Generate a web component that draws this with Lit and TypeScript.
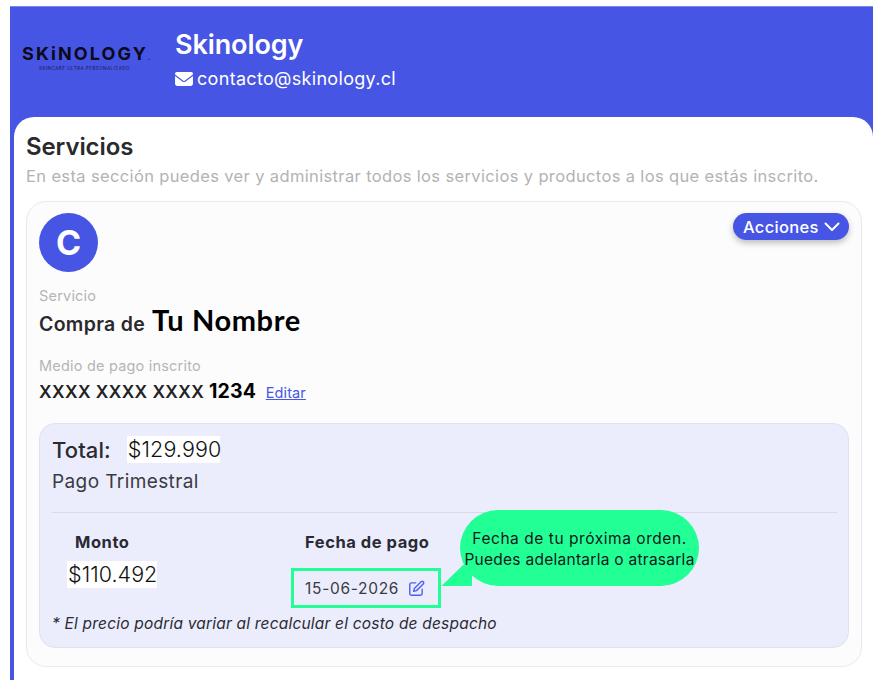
import { LitElement, html, css } from "lit";
import { customElement } from "lit/decorators.js";

@customElement("app-root")
export class AppRoot extends LitElement {
  static styles = css`
    :host { display: block; background: #fff; height: 680px; overflow: hidden; font-family: "Inter", "Liberation Sans", sans-serif; color: #212529; }
    .frame { margin: 6px 9px 0 10px; background: #4755e4; height: 674px; border-top: 1px solid #7b86ec; box-sizing: border-box; }
    .head { height: 110px; display: flex; box-sizing: border-box; padding: 0 0 0 12px; }
    .logo { width: 153px; padding-top: 39px; box-sizing: border-box; color: #0a0a1a; }
    .logo b { display: block; font-size: 18px; line-height: 16px; font-weight: 700; letter-spacing: 2.1px; white-space: nowrap; }
    .logo b i { font-style: normal; font-size: 7px; letter-spacing: 0; color: #1a1a40; }
    .logo span { display: block; font-size: 4.5px; line-height: 6px; letter-spacing: 0.5px; margin-left: 17px; white-space: nowrap; color: #1a1a50; }
    .ident { color: #fff; padding-top: 21px; }
    .ident h1 { margin: 0; font-size: 27px; line-height: 34px; font-weight: 600; letter-spacing: -0.1px; }
    .mail { display: flex; align-items: center; gap: 4px; margin-top: 5px; font-size: 18px; line-height: 24px; letter-spacing: 0.31px; font-weight: 400; }
    .mail svg { width: 18px; height: 14px; }
    .panel { margin-left: 4px; background: #fff; border-radius: 20px 20px 0 0; height: 563px; padding: 13px 11px 0 12px; box-sizing: border-box; }
    h2 { margin: 0; font-size: 24px; line-height: 33px; font-weight: 600; color: #2a2a2c; letter-spacing: -0.1px; }
    .sub { margin: 2px 0 0; font-size: 16.5px; line-height: 22px; color: #b3b3b3; letter-spacing: 0.36px; white-space: nowrap; }
    .card { margin-top: 14px; background: #fcfcfd; border: 1px solid #e8e8f2; border-radius: 20px; height: 466px; box-sizing: border-box; padding: 11px 12px 11px 12px; position: relative; }
    .top { display: flex; justify-content: space-between; align-items: flex-start; }
    .avatar { width: 59px; height: 59px; border-radius: 50%; background: #4755e4; color: #fff; display: flex; align-items: center; justify-content: center; font-size: 34px; font-weight: 700; }
    .btn { display: flex; align-items: center; gap: 5px; height: 27px; padding: 0 0 0 10px; width: 116px; box-sizing: border-box; background: #4755e4; color: #fff; border-radius: 14px; font-size: 16.5px; font-weight: 500; box-shadow: 0 3px 6px rgba(0,0,0,.25); letter-spacing: .3px; }
    .btn svg { width: 16px; height: 10px; }
    .label { font-size: 14.5px; line-height: 18px; color: #b5b5b5; letter-spacing: .2px; }
    .l1 { margin-top: 15px; }
    .val { display: flex; align-items: baseline; white-space: nowrap; }
    .compra { font-size: 19.5px; font-weight: 600; color: #2a2a2c; letter-spacing: .3px; }
    .nombre { font-family: "Lato", sans-serif; font-size: 29px; font-weight: 700; color: #000; margin-left: 7px; line-height: 30px; letter-spacing: .6px; }
    .l2 { margin-top: 21px; }
    .cardno { margin-top: 4px; font-size: 17.5px; line-height: 24px; font-weight: 600; letter-spacing: .38px; color: #222; white-space: nowrap; }
    .cardno b { color: #000; font-weight: 700; font-size: 19.5px; letter-spacing: .1px; }
    .cardno a { font-size: 14.5px; font-weight: 400; color: #4755e4; text-decoration: underline; margin-left: 5px; letter-spacing: .1px; }
    .inner { margin-top: 18px; background: #ebedfd; border: 1px solid #e0e2f2; border-radius: 16px; height: 225px; box-sizing: border-box; padding: 12px 11px 12px 12px; position: relative; }
    .total { display: flex; align-items: center; height: 27px; }
    .total strong { font-size: 22px; font-weight: 500; color: #2a2a33; letter-spacing: .1px; }
    .white { background: #fff; color: #111; font-size: 21.5px; font-weight: 300; line-height: 27px; padding: 0 1px; white-space: nowrap; }
    .total .white { margin-left: 16px; width: 93px; box-sizing: border-box; letter-spacing: .1px; }
    .plan { font-size: 19px; line-height: 26px; margin-top: 6px; color: #3a3a42; letter-spacing: .4px; }
    hr { border: none; border-top: 1px solid #d8dae8; margin: 17px 0 0; }
    .cols { display: grid; grid-template-columns: 239px 1fr; height: 97px; }
    .c1 h4, .c2 h4 { margin: 19px 0 0; font-size: 16.5px; line-height: 21px; font-weight: 700; color: #2a2a33; letter-spacing: .55px; }
    .c1 h4 { padding-left: 23px; }
    .c1 .white { display: inline-block; margin: 8px 0 0 15px; width: 90px; box-sizing: border-box; letter-spacing: .05px; }
    .c2 h4 { padding-left: 14px; white-space: nowrap; }
    .date { display: inline-flex; align-items: center; gap: 9px; margin-top: 15px; width: 150px; height: 40px; box-sizing: border-box; border: 3px solid #22ff95; padding-left: 11px; font-size: 15.5px; color: #3a3a42; letter-spacing: .7px; }
    .date svg { width: 17px; height: 17px; }
    .note { font-size: 15.5px; line-height: 20px; font-style: italic; color: #2a2a33; margin-top: 4px; letter-spacing: .2px; white-space: nowrap; }
    .callout { position: absolute; left: 420px; top: 86px; width: 239px; height: 76px; background: #22ff95; border-radius: 38px; color: #101820; font-size: 15.5px; line-height: 21px; text-align: center; box-sizing: border-box; padding-top: 18px; white-space: nowrap; letter-spacing: .27px; }
    .callout .first { letter-spacing: .55px; }
    .tail { position: absolute; left: 402px; top: 141px; width: 30px; height: 21px; }
  `;
  render() {
    return html`<div class="frame">
      <div class="head">
        <div class="logo"><b>SKiNOLOGY<i>.</i></b><span>SKINCARE ULTRA PERSONALIZADO</span></div>
        <div class="ident">
          <h1>Skinology</h1>
          <div class="mail"><svg viewBox="0 0 512 400"><path fill="#fff" d="M48 0C21.500 0 0 21.500 0 48c0 15.100 7.100 29.300 19.200 38.400l217.600 163.200c11.400 8.500 27 8.500 38.400 0L492.800 86.400C504.900 77.300 512 63.100 512 48c0-26.500-21.500-48-48-48H48zM0 112v224c0 35.300 28.700 64 64 64h384c35.300 0 64-28.700 64-64V112L294.400 275.200c-22.800 17.100-54 17.100-76.800 0L0 112z"/></svg>contacto@skinology.cl</div>
        </div>
      </div>
      <div class="panel">
        <h2>Servicios</h2>
        <p class="sub">En esta sección puedes ver y administrar todos los servicios y productos a los que estás inscrito.</p>
        <div class="card">
          <div class="top">
            <div class="avatar">C</div>
            <div class="btn">Acciones <svg viewBox="0 0 16 10"><path d="M1.500 1.500 8 8l6.500-6.500" fill="none" stroke="#fff" stroke-width="2" stroke-linecap="round" stroke-linejoin="round"/></svg></div>
          </div>
          <div class="label l1">Servicio</div>
          <div class="val"><span class="compra">Compra de</span><span class="nombre">Tu Nombre</span></div>
          <div class="label l2">Medio de pago inscrito</div>
          <div class="cardno">XXXX XXXX XXXX <b>1234</b> <a>Editar</a></div>
          <div class="inner">
            <div class="total"><strong>Total:</strong><span class="white">$129.990</span></div>
            <div class="plan">Pago Trimestral</div>
            <hr />
            <div class="cols">
              <div class="c1"><h4>Monto</h4><span class="white">$110.492</span></div>
              <div class="c2"><h4>Fecha de pago</h4>
                <div class="date">15-06-2026 <svg viewBox="0 0 24 24" fill="none" stroke="#4f5ff0" stroke-width="2" stroke-linecap="round" stroke-linejoin="round"><path d="M11 4H5a2.500 2.500 0 0 0-2.500 2.500V19A2.500 2.500 0 0 0 5 21.500h12.500A2.500 2.500 0 0 0 20 19v-6"/><path d="M18.500 2.500a2.100 2.100 0 0 1 3 3L12 15l-4 1 1-4 9.500-9.500z"/></svg></div>
              </div>
            </div>
            <div class="note">* El precio podría variar al recalcular el costo de despacho</div>
            <svg class="tail" viewBox="0 0 30 21"><path d="M0 20.500 L21 0 L30 0 L30 21 L0 21 Z" fill="#22ff95"/></svg>
            <div class="callout"><span class="first">Fecha de tu próxima orden.</span><br />Puedes adelantarla o atrasarla</div>
          </div>
        </div>
      </div>
    </div>`;
  }
}
